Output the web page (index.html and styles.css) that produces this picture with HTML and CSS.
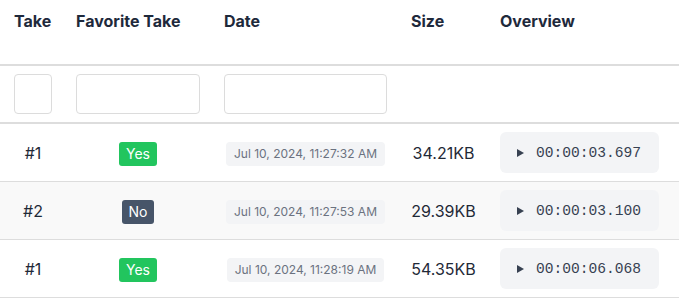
FILE: index.html
```html
<!DOCTYPE html>
<html lang="en">
<head>
<meta charset="utf-8">
<title>Takes</title>
<link rel="stylesheet" href="styles.css">
</head>
<body>
<table class="takes">
  <colgroup>
    <col class="c-take">
    <col class="c-fav">
    <col class="c-date">
    <col class="c-size">
    <col class="c-over">
  </colgroup>
  <thead>
    <tr class="titles">
      <th class="first">Take</th>
      <th>Favorite Take</th>
      <th>Date</th>
      <th>Size</th>
      <th>Overview</th>
    </tr>
    <tr class="filters">
      <th class="first"><input class="filter f-take" type="text"></th>
      <th><input class="filter f-fav" type="text"></th>
      <th><input class="filter f-date" type="text"></th>
      <th></th>
      <th></th>
    </tr>
  </thead>
  <tbody>
    <tr>
      <td class="first num">#1</td>
      <td class="center"><span class="badge yes">Yes</span></td>
      <td class="center"><span class="chip">Jul 10, 2024, 11:27:32 AM</span></td>
      <td class="center size">34.21KB</td>
      <td><button class="play" type="button"><span class="tri"></span><span class="time">00:00:03.697</span></button></td>
    </tr>
    <tr class="alt">
      <td class="first num">#2</td>
      <td class="center"><span class="badge no">No</span></td>
      <td class="center"><span class="chip">Jul 10, 2024, 11:27:53 AM</span></td>
      <td class="center size">29.39KB</td>
      <td><button class="play" type="button"><span class="tri"></span><span class="time">00:00:03.100</span></button></td>
    </tr>
    <tr>
      <td class="first num">#1</td>
      <td class="center"><span class="badge yes">Yes</span></td>
      <td class="center"><span class="chip">Jul 10, 2024, 11:28:19 AM</span></td>
      <td class="center size">54.35KB</td>
      <td><button class="play" type="button"><span class="tri"></span><span class="time">00:00:06.068</span></button></td>
    </tr>
  </tbody>
</table>
</body>
</html>
```
FILE: styles.css
```css
html, body {
  margin: 0;
  padding: 0;
  background: #ffffff;
}
body {
  font-family: Inter, "Noto Sans", sans-serif;
  color: #1f2937;
}
.takes {
  width: 679px;
  table-layout: fixed;
  border-collapse: separate;
  border-spacing: 0;
}
.c-take { width: 64px; }
.c-fav { width: 148px; }
.c-date { width: 187px; }
.c-size { width: 89px; }
.c-over { width: 191px; }

.takes th,
.takes td {
  padding: 8px 12px;
}
.takes .first {
  padding-left: 14px;
}
.titles th {
  text-align: left;
  vertical-align: top;
  font-size: 16px;
  font-weight: 700;
  line-height: 20px;
  color: #1e293b;
  padding-top: 11px;
  padding-bottom: 33px;
  border-bottom: 2px solid #dddddd;
}
.filters th {
  text-align: left;
  border-bottom: 2px solid #dddddd;
}
.filter {
  display: block;
  box-sizing: border-box;
  height: 40px;
  margin: 0;
  border: 1px solid #dcdcdc;
  border-radius: 4px;
  background: #fff;
  padding: 0 8px;
  font: inherit;
}
.f-take { width: 38px; }
.f-fav { width: 124px; }
.f-date { width: 163px; }

.takes tbody td {
  vertical-align: middle;
  border-bottom: 1px solid #dddddd;
  font-size: 16px;
  line-height: 20px;
}
.takes tbody tr.alt td {
  background: #f9f9f9;
}
.center, .num {
  text-align: center;
}
.num { color: #1f2937; }
.size { color: #1f2937; }

.badge {
  display: inline-block;
  vertical-align: middle;
  height: 24px;
  line-height: 24px;
  padding: 0 7px;
  border-radius: 3px;
  font-size: 14px;
  color: #ffffff;
  margin-top: 3px;
}
.badge.yes { background: #22c55e; }
.badge.no { background: #475569; }

.chip {
  display: inline-block;
  vertical-align: middle;
  height: 24px;
  line-height: 24px;
  padding: 0 8px;
  border-radius: 4px;
  background: #f3f4f6;
  color: #6b7280;
  font-size: 12px;
  white-space: nowrap;
  margin-top: 3px;
}

.play {
  display: flex;
  align-items: center;
  gap: 12px;
  box-sizing: border-box;
  width: 159px;
  height: 41px;
  margin: 0;
  padding: 0 0 0 17px;
  border: none;
  border-radius: 6px;
  background: #f3f4f6;
  color: #374151;
  cursor: pointer;
}
.tri {
  width: 0;
  height: 0;
  border-top: 4.5px solid transparent;
  border-bottom: 4.5px solid transparent;
  border-left: 7px solid #374151;
}
.time {
  font-family: "Liberation Mono", "DejaVu Sans Mono", monospace;
  font-size: 14.6px;
  color: #374151;
}
```
